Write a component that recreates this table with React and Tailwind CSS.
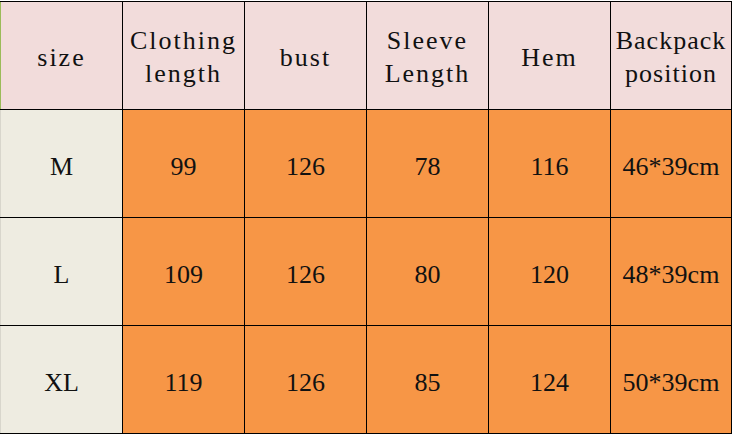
import React from 'react';

const header = [['size'], ['Clothing', 'length'], ['bust'], ['Sleeve', 'Length'], ['Hem'], ['Backpack', 'position']];

const rows = [
  ['M', '99', '126', '78', '116', '46*39cm'],
  ['L', '109', '126', '80', '120', '48*39cm'],
  ['XL', '119', '126', '85', '124', '50*39cm'],
];

const App = () => {
  return (
    <div className="w-[733px] h-[435px] bg-white overflow-hidden" style={{ fontFamily: '"Liberation Serif", serif' }}>
      <div className="mt-px w-[732px] bg-black pt-px pb-px pr-px grid grid-cols-[122px_121px_121px_121px_121px_120px] grid-rows-[107px_107px_107px_107px] gap-px text-[26px] leading-[33px] text-[#111]">
        {header.map((lines, i) => (
          <div
            key={i}
            className={`bg-[#f2dcdb] pt-[3px] flex flex-col items-center justify-center text-center ${i === 5 ? 'tracking-[1px]' : 'tracking-[2px]'} ${i === 0 ? 'border-l border-[#9bbb59]' : ''}`}
          >
            {lines.map((t) => (
              <span key={t}>{t}</span>
            ))}
          </div>
        ))}
        {rows.map((row, r) =>
          row.map((cell, c) => (
            <div
              key={`${r}-${c}`}
              className={`pt-[5px] flex items-center justify-center ${c === 0 ? 'bg-[#eeece1] border-l border-[#d8d6cc]' : 'bg-[#f79646]'}`}
            >
              {cell}
            </div>
          ))
        )}
      </div>
    </div>
  );
};

export default App;
